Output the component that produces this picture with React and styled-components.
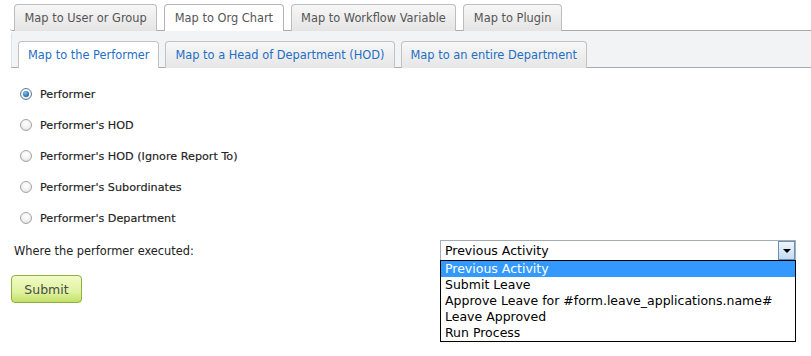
import React from "react";
import styled, { createGlobalStyle, css } from "styled-components";

const Global = createGlobalStyle`
  html, body { margin: 0; padding: 0; background: #fff; }
  body { font-family: "DejaVu Sans", Verdana, sans-serif; font-size: 11px; color: #333; }
`;

const Page = styled.div`
  width: 811px;
  height: 356px;
  padding-left: 10px;
  box-sizing: border-box;
  overflow: hidden;
`;

const TopBar = styled.div`
  display: flex;
  gap: 7px;
  padding: 4px 0 0 4px;
  border-bottom: 1px solid #aaa;
  border-bottom-left-radius: 3px;
`;

const tabBase = css`
  box-sizing: border-box;
  display: flex;
  align-items: center;
  border: 1px solid #bdbdbd;
  border-bottom: none;
  border-radius: 4px 4px 0 0;
  font-size: 11.4px;
  white-space: nowrap;
  margin-bottom: -1px;
`;

const TopTab = styled.div`
  ${tabBase}
  padding: 0 9.5px;
  color: #555;
  height: 27px;
  background: ${(p) =>
    p.$active ? "#fff" : "linear-gradient(#f7f7f7, #e4e4e4)"};
  border-color: ${(p) => (p.$active ? "#b5b5b5" : "#bdbdbd")};
`;

const SubPanel = styled.div`
  background: #f2f3f5;
  margin-left: 1px;
  border-left: 1px solid #e2e2e2;
  border-top-left-radius: 4px;
  padding: 10px 0 0 6px;
  border-bottom: 1px solid #aaa;
  display: flex;
  gap: 6px;
`;

const SubTab = styled.div`
  ${tabBase}
  padding: 0 9px;
  height: 27px;
  color: #1f6fc5;
  background: ${(p) =>
    p.$active ? "#fff" : "linear-gradient(#f7f7f7, #e6e6e6)"};
  border-color: #c2c2c2;
`;

const Body = styled.div`
  padding: 20px 0 0 10px;
  display: flex;
  flex-direction: column;
`;

const RadioList = styled.div`
  display: flex;
  flex-direction: column;
  gap: 19px;
`;

const RadioRow = styled.label`
  display: flex;
  align-items: center;
  gap: 8px;
  height: 12px;
  font-family: "DejaVu Sans", Tahoma, sans-serif;
  font-size: 11.2px;
  color: #222;
  -webkit-text-stroke: 0.15px #222;
`;

const RadioDot = styled.span`
  width: 12px;
  height: 12px;
  border-radius: 50%;
  border: 1px solid #a4a4a4;
  background: radial-gradient(circle at 50% 35%, #fff 0%, #f1f1f1 55%, #d2d2d2 100%);
  display: flex;
  align-items: center;
  justify-content: center;
  box-sizing: border-box;
  flex: none;
  &::after {
    content: "";
    display: ${(p) => (p.$checked ? "block" : "none")};
    width: 6px;
    height: 6px;
    border-radius: 50%;
    background: radial-gradient(circle at 40% 35%, #7fc4f0, #1a5f9a 75%);
  }
  ${(p) =>
    p.$checked &&
    css`
      border-color: #5a7fa0;
    `}
`;

const SelectRow = styled.div`
  display: flex;
  align-items: center;
  margin-top: 16px;
  margin-left: -6px;
`;

const Label = styled.div`
  width: 426px;
  font-size: 11.4px;
  color: #222;
`;

const SelectWrap = styled.div`
  position: relative;
  width: 356px;
`;

const SelectBox = styled.div`
  height: 21px;
  box-sizing: border-box;
  border: 1px solid #a5acb5;
  display: flex;
  align-items: center;
  padding-left: 4px;
  font-size: 12.5px;
  color: #000;
  position: relative;
`;

const Arrow = styled.div`
  position: absolute;
  right: 0;
  top: 0;
  width: 17px;
  height: 19px;
  box-sizing: border-box;
  border: 1px solid #6d8fb3;
  background: linear-gradient(#eef6fd, #c4dcf3);
  display: flex;
  align-items: center;
  justify-content: center;
  &::after {
    content: "";
    border-left: 4px solid transparent;
    border-right: 4px solid transparent;
    border-top: 4px solid #000;
  }
`;

const DropList = styled.div`
  position: absolute;
  left: 0;
  top: 20px;
  width: 356px;
  box-sizing: border-box;
  border: 1px solid #000;
  background: #fff;
  z-index: 2;
`;

const Option = styled.div`
  height: 16px;
  line-height: 16px;
  padding-left: 4px;
  font-size: 12.5px;
  color: ${(p) => (p.$selected ? "#fff" : "#000")};
  background: ${(p) => (p.$selected ? "#3399ff" : "#fff")};
  white-space: nowrap;
`;

const SubmitButton = styled.button`
  margin-top: 14px;
  margin-left: -9px;
  width: 71px;
  height: 28px;
  border: 1px solid #8db23b;
  border-radius: 4px;
  background: linear-gradient(#f0fbc6, #dff3a0 60%, #c4e06a);
  color: #4a4a4a;
  font-family: "DejaVu Sans", Verdana, sans-serif;
  font-size: 12.5px;
  padding: 0;
  align-self: flex-start;
`;

const topTabs = [
  "Map to User or Group",
  "Map to Org Chart",
  "Map to Workflow Variable",
  "Map to Plugin",
];
const subTabs = [
  "Map to the Performer",
  "Map to a Head of Department (HOD)",
  "Map to an entire Department",
];
const radios = [
  "Performer",
  "Performer's HOD",
  "Performer's HOD (Ignore Report To)",
  "Performer's Subordinates",
  "Performer's Department",
];
const options = [
  "Previous Activity",
  "Submit Leave",
  "Approve Leave for #form.leave_applications.name#",
  "Leave Approved",
  "Run Process",
];

export default function App() {
  return (
    <Page>
      <Global />
      <TopBar>
        {topTabs.map((t, i) => (
          <TopTab key={t} $active={i === 1}>
            {t}
          </TopTab>
        ))}
      </TopBar>
      <SubPanel>
        {subTabs.map((t, i) => (
          <SubTab key={t} $active={i === 0}>
            {t}
          </SubTab>
        ))}
      </SubPanel>
      <Body>
        <RadioList>
          {radios.map((r, i) => (
            <RadioRow key={r}>
              <RadioDot $checked={i === 0} />
              {r}
            </RadioRow>
          ))}
        </RadioList>
        <SelectRow>
          <Label>Where the performer executed:</Label>
          <SelectWrap>
            <SelectBox>
              Previous Activity
              <Arrow />
            </SelectBox>
            <DropList>
              {options.map((o, i) => (
                <Option key={o} $selected={i === 0}>
                  {o}
                </Option>
              ))}
            </DropList>
          </SelectWrap>
        </SelectRow>
        <SubmitButton>Submit</SubmitButton>
      </Body>
    </Page>
  );
}
